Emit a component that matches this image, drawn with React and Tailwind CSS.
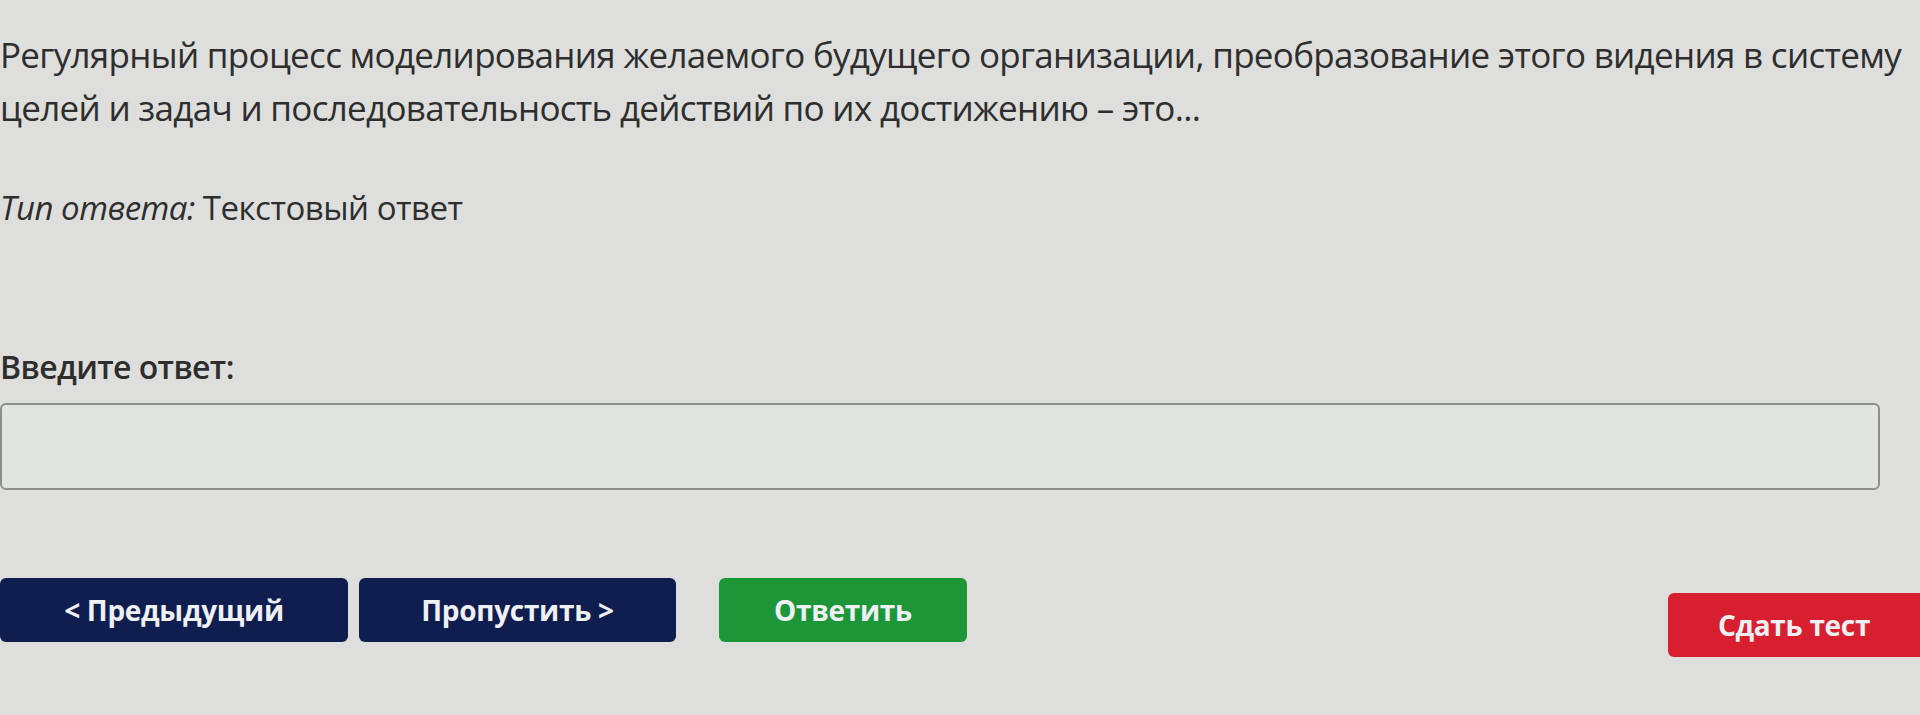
import React, { useState } from 'react';

function NavButton({ children, className }) {
  return (
    <button
      type="button"
      className={`h-16 rounded-md text-[28px] font-bold tracking-[-0.3px] text-[#eef0f4] flex items-center justify-center ${className}`}
    >
      {children}
    </button>
  );
}

export default function App() {
  const [answer, setAnswer] = useState('');

  return (
    <div
      className="w-screen h-[715px] overflow-hidden bg-[#dedfdc] text-[#2e2e2e] flex flex-col"
      style={{ fontFamily: '"Open Sans", "Noto Sans", sans-serif' }}
    >
      {/* Question */}
      <p className="pt-[28px] text-[35px] leading-[53px] tracking-[-0.7px] whitespace-nowrap">
        Регулярный процесс моделирования желаемого будущего организации, преобразование этого видения в систему
        <br />
        целей и задач и последовательность действий по их достижению – это...
      </p>

      <p className="mt-[52px] text-[33px] leading-[44px] tracking-[-0.5px]">
        <i>Тип ответа:</i> Текстовый ответ
      </p>

      {/* Answer input */}
      <label className="mt-[116px] text-[32px] leading-[42px] font-semibold tracking-[-0.6px]">
        Введите ответ:
      </label>
      <div className="mt-[15px] pr-10">
        <input
          value={answer}
          onChange={(e) => setAnswer(e.target.value)}
          className="w-full h-[87px] rounded-md border-2 border-[#8c8e8e] bg-[#e2e4e1] outline-none px-4 text-[28px]"
        />
      </div>

      {/* Actions */}
      <div className="mt-[88px] flex items-start">
        <NavButton className="w-[348px] bg-[#0f1d4f]">&lt; Предыдущий</NavButton>
        <NavButton className="ml-[11px] w-[317px] bg-[#0f1d4f]">Пропустить &gt;</NavButton>
        <NavButton className="ml-[43px] w-[248px] bg-[#1d9637]">Ответить</NavButton>
        <NavButton className="ml-auto mt-[15px] w-[252px] rounded-r-none bg-[#d81f2f]">Сдать тест</NavButton>
      </div>
    </div>
  );
}
